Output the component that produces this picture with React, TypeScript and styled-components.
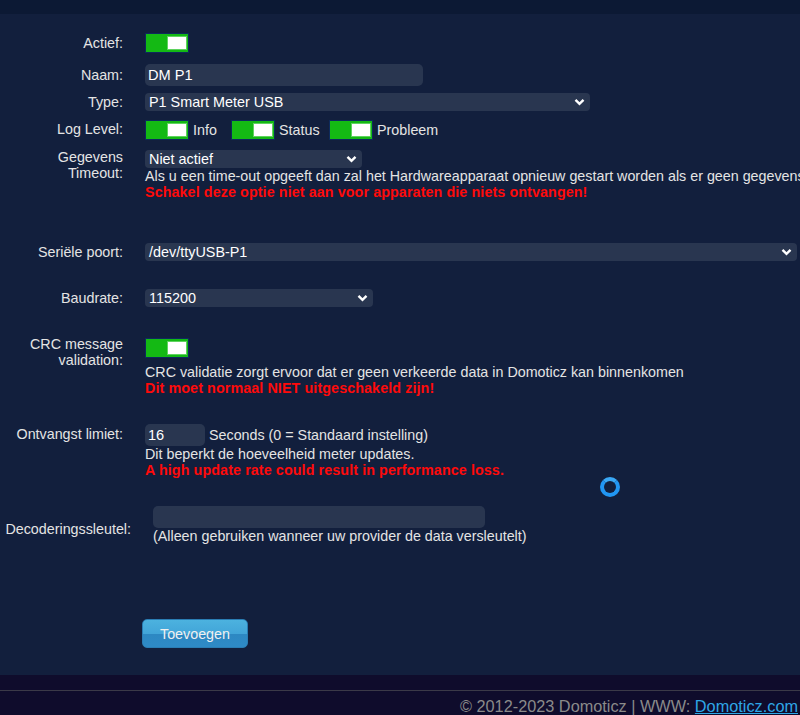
import styled, { createGlobalStyle } from 'styled-components'

const GlobalStyle = createGlobalStyle`
  html, body {
    margin: 0;
    padding: 0;
    background: #121f3d;
    overflow: hidden;
  }
  body {
    font-family: "Liberation Sans", Arial, sans-serif;
    font-size: 14.3px;
    line-height: 16px;
    color: #e4e4e4;
  }
`

const Page = styled.div`
  width: 800px;
  height: 715px;
  display: flex;
  flex-direction: column;
  overflow: hidden;
  position: relative;
`

const TopBar = styled.div`
  height: 14px;
  background: #0c1934;
  flex: none;
`

const Main = styled.main`
  flex: 1;
  display: flex;
  flex-direction: column;
`

const Row = styled.div<{ $top: number; $label?: number; $center?: boolean }>`
  display: grid;
  grid-template-columns: ${p => p.$label ?? 123}px 1fr;
  column-gap: 22px;
  align-items: ${p => (p.$center ? 'center' : 'start')};
  margin-top: ${p => p.$top}px;
`

const Label = styled.div<{ $pad?: number }>`
  text-align: right;
  margin-top: ${p => p.$pad ?? 0}px;
  white-space: nowrap;
`

const Control = styled.div<{ $pad?: number }>`
  display: flex;
  flex-direction: column;
  align-items: flex-start;
  margin-top: ${p => p.$pad ?? 0}px;
  min-width: 0;
`

const Inline = styled.div`
  display: flex;
  align-items: center;
`

const Toggle = styled.div`
  position: relative;
  width: 44px;
  height: 20px;
  box-sizing: border-box;
  background: #14b914;
  border: 1px solid #0d2a5c;
  flex: none;
`

const Knob = styled.span`
  position: absolute;
  right: 1px;
  top: 2px;
  width: 20px;
  height: 14px;
  box-sizing: border-box;
  background: #ffffff;
  border: 1px solid #5fd35f;
`

const LevelItem = styled.div<{ $w: number }>`
  display: flex;
  align-items: center;
  width: ${p => p.$w}px;
  gap: 4px;
`

const TextInput = styled.div<{ $w: number }>`
  width: ${p => p.$w}px;
  height: 22px;
  box-sizing: border-box;
  background: #293650;
  border-radius: 5px;
  padding: 0 3px;
  display: flex;
  align-items: center;
  color: #ffffff;
  font-size: 14.6px;
`

const Select = styled.div<{ $w: number }>`
  width: ${p => p.$w}px;
  height: 18px;
  box-sizing: border-box;
  background: #293650;
  border-radius: 4px;
  padding: 0 5px 0 4px;
  display: flex;
  align-items: center;
  justify-content: space-between;
  color: #ffffff;
  font-size: 14.4px;
`

const Help = styled.div<{ $gap?: number }>`
  white-space: nowrap;
  margin-top: ${p => p.$gap ?? 0}px;
`

const Warn = styled.div`
  color: #ff0a0a;
  font-weight: bold;
  letter-spacing: 0.1px;
  white-space: nowrap;
`

const Suffix = styled.span`
  margin-left: 4px;
  white-space: nowrap;
`

const Button = styled.button`
  margin: 75px 0 0 142px;
  align-self: flex-start;
  width: 106px;
  height: 29px;
  border: 1px solid #2a7db4;
  border-radius: 5px;
  background: linear-gradient(#4cb2df 0%, #42a5d8 50%, #2d88c2 52%, #2e8ac6 100%);
  color: #f0f0f0;
  font-family: "Liberation Sans", Arial, sans-serif;
  font-size: 14.3px;
  padding: 0;
`

const Spinner = styled.div`
  position: absolute;
  left: 600px;
  top: 477px;
  width: 20px;
  height: 20px;
  box-sizing: border-box;
  border-radius: 50%;
  border: 4px solid #2196f3;
  border-top-color: #3aa8f5;
`

const Footer = styled.footer`
  height: 40px;
  flex: none;
  background: #0f0c2c;
  display: flex;
  flex-direction: column;
`

const FooterLine = styled.div`
  margin-top: 15px;
  height: 1px;
  background: #3b3a48;
`

const FooterText = styled.div`
  text-align: right;
  padding-right: 2px;
  margin-top: 6px;
  font-size: 16.3px;
  line-height: 18px;
  color: #8a8a8a;
  white-space: nowrap;

  a {
    color: #2ea6e6;
    text-decoration: underline;
  }
`

function Chevron() {
  return (
    <svg width="11" height="8" viewBox="0 0 11 8">
      <path d="M1.5 1.8 L5.5 5.8 L9.5 1.8" fill="none" stroke="#ffffff" strokeWidth="2.4" />
    </svg>
  )
}

function Switch() {
  return (
    <Toggle>
      <Knob />
    </Toggle>
  )
}

export default function App() {
  return (
    <>
      <GlobalStyle />
      <Page>
        <TopBar />
        <Main>
          <Row $top={19}>
            <Label $pad={2}>Actief:</Label>
            <Control>
              <Switch />
            </Control>
          </Row>

          <Row $top={11}>
            <Label $pad={3}>Naam:</Label>
            <Control>
              <TextInput $w={278}>DM P1</TextInput>
            </Control>
          </Row>

          <Row $top={7}>
            <Label $pad={1}>Type:</Label>
            <Control>
              <Select $w={445}>
                <span>P1 Smart Meter USB</span>
                <Chevron />
              </Select>
            </Control>
          </Row>

          <Row $top={9}>
            <Label $pad={1}>Log Level:</Label>
            <Control>
              <Inline>
                <LevelItem $w={86}>
                  <Switch />
                  <span>Info</span>
                </LevelItem>
                <LevelItem $w={98}>
                  <Switch />
                  <span>Status</span>
                </LevelItem>
                <LevelItem $w={110}>
                  <Switch />
                  <span>Probleem</span>
                </LevelItem>
              </Inline>
            </Control>
          </Row>

          <Row $top={9}>
            <Label>
              Gegevens
              <br />
              Timeout:
            </Label>
            <Control $pad={1}>
              <Select $w={217}>
                <span>Niet actief</span>
                <Chevron />
              </Select>
              <Help>
                Als u een time-out opgeeft dan zal het Hardwareapparaat opnieuw gestart worden als er geen gegevens
              </Help>
              <Warn>Schakel deze optie niet aan voor apparaten die niets ontvangen!</Warn>
            </Control>
          </Row>

          <Row $top={43}>
            <Label $pad={1}>Seriële poort:</Label>
            <Control>
              <Select $w={652}>
                <span>/dev/ttyUSB-P1</span>
                <Chevron />
              </Select>
            </Control>
          </Row>

          <Row $top={28}>
            <Label $pad={1}>Baudrate:</Label>
            <Control>
              <Select $w={228}>
                <span>115200</span>
                <Chevron />
              </Select>
            </Control>
          </Row>

          <Row $top={29}>
            <Label>
              CRC message
              <br />
              validation:
            </Label>
            <Control $pad={2}>
              <Switch />
              <Help $gap={6}>CRC validatie zorgt ervoor dat er geen verkeerde data in Domoticz kan binnenkomen</Help>
              <Warn>Dit moet normaal NIET uitgeschakeld zijn!</Warn>
            </Control>
          </Row>

          <Row $top={28}>
            <Label $pad={2}>Ontvangst limiet:</Label>
            <Control>
              <Inline>
                <TextInput $w={60}>16</TextInput>
                <Suffix>Seconds (0 = Standaard instelling)</Suffix>
              </Inline>
              <Help>Dit beperkt de hoeveelheid meter updates.</Help>
              <Warn>A high update rate could result in performance loss.</Warn>
            </Control>
          </Row>

          <Row $top={28} $label={131} $center>
            <Label $pad={8}>Decoderingssleutel:</Label>
            <Control>
              <TextInput $w={332} />
              <Help>(Alleen gebruiken wanneer uw provider de data versleutelt)</Help>
            </Control>
          </Row>

          <Button>Toevoegen</Button>
        </Main>
        <Footer>
          <FooterLine />
          <FooterText>
            © 2012-2023 Domoticz | WWW: <a href="#">Domoticz.com</a>
          </FooterText>
        </Footer>
        <Spinner />
      </Page>
    </>
  )
}
